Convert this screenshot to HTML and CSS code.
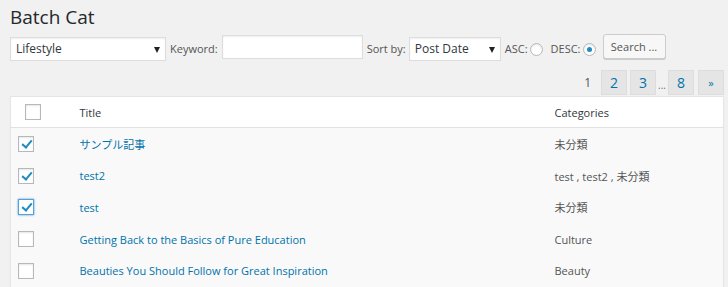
FILE: index.html
```html
<!DOCTYPE html>
<html lang="ja">
<head>
    <meta charset="UTF-8">
    <title>Batch Cat</title>
    <link rel="stylesheet" href="styles.css">
</head>
<body>
<div class="wrap">
    <h1>Batch Cat</h1>

    <!-- 絞り込み -->
    <form class="filters">
        <span class="select-box cat-select">
            <select><option>Lifestyle</option></select>
        </span>
        <label class="lbl first-lbl">Keyword:</label>
        <input type="text" class="keyword">
        <label class="lbl">Sort by:</label>
        <span class="select-box sort-select">
            <select><option>Post Date</option></select>
        </span>
        <label class="lbl first-lbl">ASC:</label>
        <input type="radio" name="order" class="radio">
        <label class="lbl desc-lbl">DESC:</label>
        <input type="radio" name="order" class="radio" checked>
        <button type="button" class="btn">Search ...</button>
    </form>

    <div class="pager">
        <span class="current">1</span>
        <a class="page">2</a>
        <a class="page">3</a>
        <span class="dots">...</span>
        <a class="page">8</a>
        <a class="page next">&raquo;</a>
    </div>

    <table class="list">
        <colgroup>
            <col class="w-check">
            <col class="w-title">
            <col>
        </colgroup>
        <thead>
            <tr>
                <th class="check head-check"><input type="checkbox" class="cb"></th>
                <th>Title</th>
                <th>Categories</th>
            </tr>
        </thead>
        <tbody>
            <tr>
                <td class="check"><input type="checkbox" class="cb" checked></td>
                <td><a>サンプル記事</a></td>
                <td>未分類</td>
            </tr>
            <tr>
                <td class="check"><input type="checkbox" class="cb" checked></td>
                <td><a>test2</a></td>
                <td>test , test2 , 未分類</td>
            </tr>
            <tr>
                <td class="check"><input type="checkbox" class="cb focus" checked></td>
                <td><a>test</a></td>
                <td>未分類</td>
            </tr>
            <tr>
                <td class="check"><input type="checkbox" class="cb"></td>
                <td><a>Getting Back to the Basics of Pure Education</a></td>
                <td>Culture</td>
            </tr>
            <tr>
                <td class="check"><input type="checkbox" class="cb"></td>
                <td><a>Beauties You Should Follow for Great Inspiration</a></td>
                <td>Beauty</td>
            </tr>
        </tbody>
    </table>
</div>
</body>
</html>
```

FILE: styles.css
```css
body {
    margin: 0;
    background: #f1f1f1;
    color: #444;
    font-family: "Open Sans", "Noto Sans CJK JP", sans-serif;
    font-size: 11px;
}
.wrap {
    padding: 0 4px 0 10px;
}
h1 {
    margin: 0;
    padding: 3px 0 0;
    font-size: 19px;
    font-weight: 400;
    line-height: 28px;
    color: #23282d;
}
.filters {
    display: flex;
    align-items: center;
    gap: 4px;
    margin-top: 4px;
    height: 26px;
}
.lbl {
    color: #555;
}
.desc-lbl {
    margin-left: 4px;
}
.select-box {
    position: relative;
    display: block;
    height: 24px;
    margin-top: 1px;
}
.select-box select {
    appearance: none;
    width: 100%;
    height: 24px;
    border: 1px solid #ddd;
    background: #fff;
    box-shadow: inset 0 1px 2px rgba(0, 0, 0, 0.07);
    font: inherit;
    font-size: 12px;
    color: #32373c;
    padding: 0 5px;
    margin: 0;
}
.select-box::after {
    content: "";
    position: absolute;
    right: 6px;
    top: 10px;
    border-left: 3px solid transparent;
    border-right: 3px solid transparent;
    border-top: 6px solid #222;
}
.cat-select { width: 156px; }
.sort-select { width: 92px; margin-left: -1px; }
.keyword {
    width: 141px;
    height: 24px;
    box-sizing: border-box;
    border: 1px solid #ddd;
    box-shadow: inset 0 1px 2px rgba(0, 0, 0, 0.07);
    margin: -2px 0 0;
    padding: 0 4px;
}
.radio {
    appearance: none;
    width: 13px;
    height: 13px;
    margin: 2px 0 0 -2px;
    border: 1px solid #b4b9be;
    border-radius: 50%;
    background: #fff;
    box-shadow: inset 0 1px 2px rgba(0, 0, 0, 0.1);
    position: relative;
}
.radio:checked::before {
    content: "";
    position: absolute;
    left: 3px;
    top: 3px;
    width: 5px;
    height: 5px;
    border-radius: 50%;
    background: #1e8cbe;
}
.btn {
    margin-left: 3px;
    margin-top: -3px;
    width: 63px;
    height: 25px;
    border: 1px solid #ccc;
    border-radius: 3px;
    background: #f7f7f7;
    box-shadow: 0 1px 0 #ccc;
    color: #555;
    font: inherit;
    font-size: 11px;
    padding: 0;
}
.pager {
    display: flex;
    justify-content: flex-end;
    align-items: center;
    gap: 3px;
    margin-top: 8px;
    height: 26px;
}
.current {
    color: #555;
    font-size: 12px;
    margin-right: 7px;
}
.page {
    display: flex;
    align-items: center;
    justify-content: center;
    width: 24px;
    height: 23px;
    border: 1px solid #ddd;
    background: #e5e5e5;
    color: #0073aa;
    font-size: 14px;
}
.page.next {
    font-size: 11px;
    margin-left: 1px;
}
.dots {
    color: #777;
    font-size: 10px;
    margin: 6px -1px 0;
}
.list {
    width: 100%;
    table-layout: fixed;
    margin-top: 1px;
    border-collapse: collapse;
    border: 1px solid #e5e5e5;
    box-shadow: 0 1px 1px rgba(0, 0, 0, 0.04);
    background: #f9f9f9;
}
.w-check { width: 69px; }
.w-title { width: 475px; }
.list th {
    background: #fff;
    font-weight: 400;
    text-align: left;
    color: #32373c;
    height: 30px;
    border-bottom: 1px solid #e1e1e1;
    padding: 0;
}
.list td {
    height: 31.75px;
    padding: 0;
    color: #555;
}
.list a {
    color: #0073aa;
}
.check {
    padding-left: 7px !important;
}
.head-check {
    padding-left: 14px !important;
}
.cb {
    appearance: none;
    display: block;
    width: 16px;
    height: 16px;
    margin: 0;
    border: 1px solid #b4b9be;
    background: #fff;
    box-shadow: inset 0 1px 2px rgba(0, 0, 0, 0.1);
    position: relative;
}
.cb.focus {
    border-color: #5b9dd9;
    box-shadow: 0 0 2px rgba(30, 140, 190, 0.8);
}
.cb:checked::before {
    content: "";
    position: absolute;
    left: 5px;
    top: 1px;
    width: 4px;
    height: 8px;
    border-right: 2.5px solid #1e8cbe;
    border-bottom: 2.5px solid #1e8cbe;
    transform: rotate(40deg);
}
```
